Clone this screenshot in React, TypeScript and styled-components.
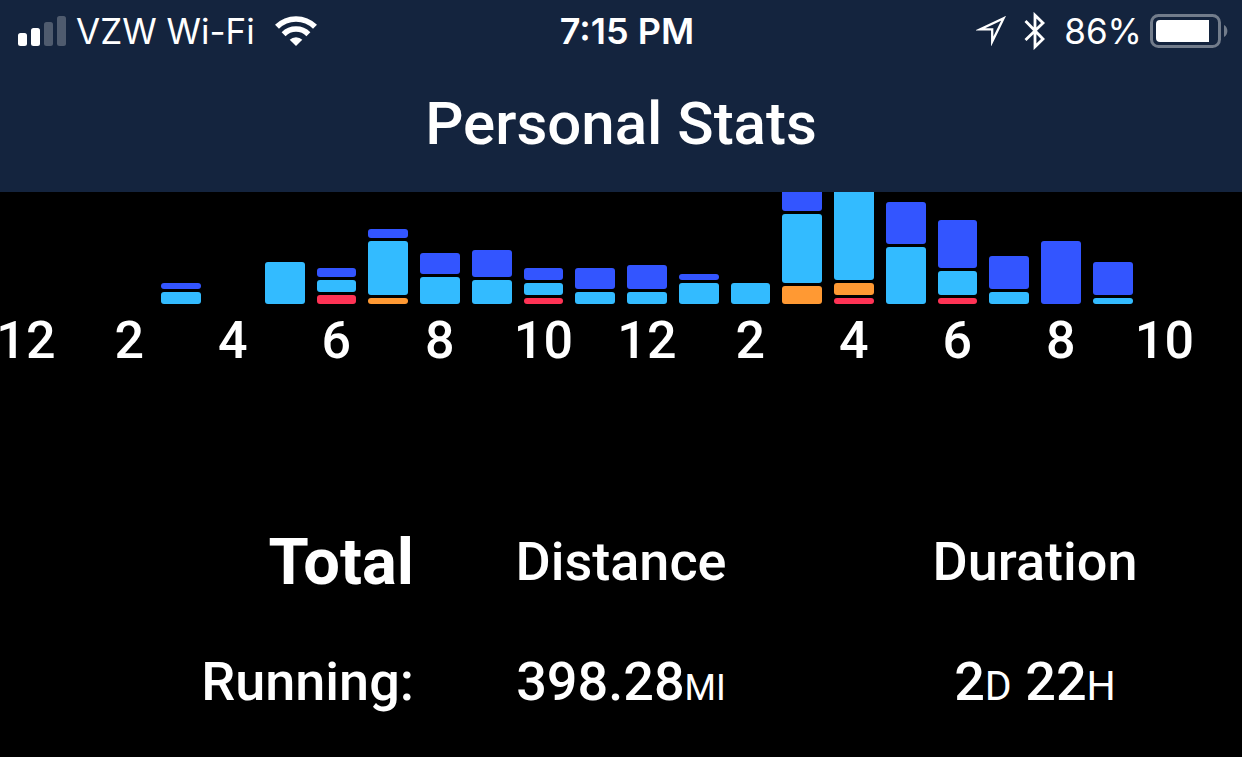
import React from "react";
import styled, { createGlobalStyle } from "styled-components";

const GlobalStyle = createGlobalStyle`
  * { box-sizing: border-box; }
  html, body { margin: 0; background: #000; }
  body {
    color: #fff;
    font-family: Roboto, "Liberation Sans", sans-serif;
    font-weight: 500;
  }
`;

const Screen = styled.div`
  min-height: 100vh;
  background: #000;
`;

const Header = styled.header`
  background: #14243e;
`;

const StatusBar = styled.div`
  display: grid;
  grid-template-columns: 1fr auto 1fr;
  align-items: center;
  height: 62px;
  padding: 0 14px 0 18px;
  font-family: Inter, "Liberation Sans", sans-serif;
  font-size: 35px;
  line-height: 44px;
  font-weight: 400;
  white-space: nowrap;
`;

const StatusGroup = styled.div<{ $end?: boolean }>`
  display: flex;
  align-items: center;
  justify-content: ${(p) => (p.$end ? "flex-end" : "flex-start")};
`;

const Carrier = styled.span`
  margin: 0 20px 0 10px;
`;

const Clock = styled.time`
  padding-left: 8px;
  font-size: 36px;
  font-weight: 600;
`;

const Percent = styled.span`
  margin: 0 8px 0 18px;
`;

const Icon = styled.svg<{ $gap?: number }>`
  display: block;
  flex: none;
  margin-left: ${(p) => p.$gap ?? 0}px;
`;

const Title = styled.h1`
  margin: 0;
  padding: 26px 0 32px;
  font-size: 60px;
  line-height: 72px;
  font-weight: 500;
  text-align: center;
`;

const Columns = styled.div`
  display: grid;
  grid-template-columns: repeat(24, minmax(0, 1fr));
`;

const Plot = styled(Columns)`
  height: 112px;
  overflow: hidden;
`;

const Stack = styled.div`
  display: flex;
  flex-direction: column-reverse;
  gap: 3px;
  height: 112px;
  padding: 0 6px;
`;

const Segment = styled.div<{ $color: string }>`
  flex: none;
  border-radius: 3px;
  background: ${(p) => p.$color};
`;

const Hours = styled(Columns)`
  padding-top: 5px;
  font-size: 52px;
  line-height: 64px;
`;

const Hour = styled.div`
  display: flex;
  justify-content: center;
  white-space: nowrap;
`;

const Totals = styled.table`
  width: 100%;
  margin-top: 129px;
  table-layout: fixed;
  border-collapse: collapse;
  font-size: 54px;
  line-height: 64px;

  th, td {
    height: 120px;
    padding: 0;
    font-weight: 500;
    text-align: center;
    vertical-align: middle;
    white-space: nowrap;
  }

  th:first-child { text-align: right; }
`;

const TotalHeading = styled.span`
  display: block;
  font-size: 65px;
  font-weight: 700;
`;

const Unit = styled.span<{ $small?: boolean }>`
  font-size: ${(p) => (p.$small ? 36 : 41)}px;
  line-height: 1;
  font-weight: 400;
`;

const red = "#ff3355";
const orange = "#ff9933";
const cyan = "#33bbff";
const blue = "#3355ff";

type Part = [color: string, height: number];

/* One entry for each hour of the day, segments listed from the baseline up. */
const hours: Part[][] = [
  [],
  [],
  [],
  [[cyan, 12], [blue, 6]],
  [],
  [[cyan, 42]],
  [[red, 9], [cyan, 12], [blue, 9]],
  [[orange, 6], [cyan, 54], [blue, 9]],
  [[cyan, 27], [blue, 21]],
  [[cyan, 24], [blue, 27]],
  [[red, 6], [cyan, 12], [blue, 12]],
  [[cyan, 12], [blue, 21]],
  [[cyan, 12], [blue, 24]],
  [[cyan, 21], [blue, 6]],
  [[cyan, 21]],
  [[orange, 18], [cyan, 69], [blue, 48]],
  [[red, 6], [orange, 12], [cyan, 120]],
  [[cyan, 57], [blue, 42]],
  [[red, 6], [cyan, 24], [blue, 48]],
  [[cyan, 12], [blue, 33]],
  [[blue, 63]],
  [[cyan, 6], [blue, 33]],
  [],
  [],
];

const SignalIcon = () => (
  <Icon width="48" height="30" viewBox="0 0 48 30" fill="#fff" aria-label="Signal">
    <rect x="0" y="17" width="9" height="13" rx="2.5" />
    <rect x="13" y="12" width="9" height="18" rx="2.5" />
    <rect x="26" y="6" width="9" height="24" rx="2.5" opacity="0.25" />
    <rect x="39" y="0" width="9" height="30" rx="2.5" opacity="0.25" />
  </Icon>
);

const WifiIcon = () => (
  <Icon width="42" height="30" viewBox="0 0 42 30" aria-label="Wi-Fi">
    <g fill="none" stroke="#fff" strokeWidth="5.6">
      <path d="M2 10.8A27 27 0 0 1 40 10.8" />
      <path d="M8.6 18.2A17.5 17.5 0 0 1 33.4 18.2" />
    </g>
    <path d="M21 30L14.7 23.7A9 9 0 0 1 27.3 23.7Z" fill="#fff" />
  </Icon>
);

const LocationIcon = () => (
  <Icon width="30" height="30" viewBox="0 0 30 30" aria-label="Location">
    <path
      d="M27.6 2.2L4 13.4H16.2V25.6Z"
      fill="none"
      stroke="#fff"
      strokeWidth="2.3"
      strokeMiterlimit="8"
    />
  </Icon>
);

const BluetoothIcon = () => (
  <Icon $gap={18} width="22" height="38" viewBox="0 0 22 38" aria-label="Bluetooth">
    <path
      d="M1.5 9L19 27L11 34.8V3.2L19 11L1.5 28"
      fill="none"
      stroke="#fff"
      strokeWidth="2.8"
      strokeMiterlimit="8"
    />
  </Icon>
);

const BatteryIcon = () => (
  <Icon width="78" height="34" viewBox="0 0 78 34" aria-label="Battery">
    <rect x="1.5" y="1.5" width="68" height="31" rx="7" fill="none" stroke="#727c8b" strokeWidth="3" />
    <path d="M10 6H59V28H10A4 4 0 0 1 6 24V10A4 4 0 0 1 10 6Z" fill="#fff" />
    <path d="M74 11A7 7 0 0 1 74 23Z" fill="#727c8b" />
  </Icon>
);

export default function App() {
  return (
    <Screen>
      <GlobalStyle />
      <Header>
        <StatusBar>
          <StatusGroup>
            <SignalIcon />
            <Carrier>VZW Wi-Fi</Carrier>
            <WifiIcon />
          </StatusGroup>
          <Clock>7:15 PM</Clock>
          <StatusGroup $end>
            <LocationIcon />
            <BluetoothIcon />
            <Percent>86%</Percent>
            <BatteryIcon />
          </StatusGroup>
        </StatusBar>
        <Title>Personal Stats</Title>
      </Header>
      <main>
        <Plot>
          {hours.map((parts, hour) => (
            <Stack key={hour}>
              {parts.map(([color, height]) => (
                <Segment key={color} $color={color} style={{ height }} />
              ))}
            </Stack>
          ))}
        </Plot>
        <Hours>
          {hours.map((_, hour) => (
            <Hour key={hour}>{hour % 2 === 0 ? hour % 12 || 12 : null}</Hour>
          ))}
        </Hours>
        <Totals>
          <thead>
            <tr>
              <th scope="col"><TotalHeading>Total</TotalHeading></th>
              <th scope="col">Distance</th>
              <th scope="col">Duration</th>
            </tr>
          </thead>
          <tbody>
            <tr>
              <th scope="row">Running:</th>
              <td>398.28<Unit $small>MI</Unit></td>
              <td>2<Unit>D</Unit> 22<Unit>H</Unit></td>
            </tr>
          </tbody>
        </Totals>
      </main>
    </Screen>
  );
}
